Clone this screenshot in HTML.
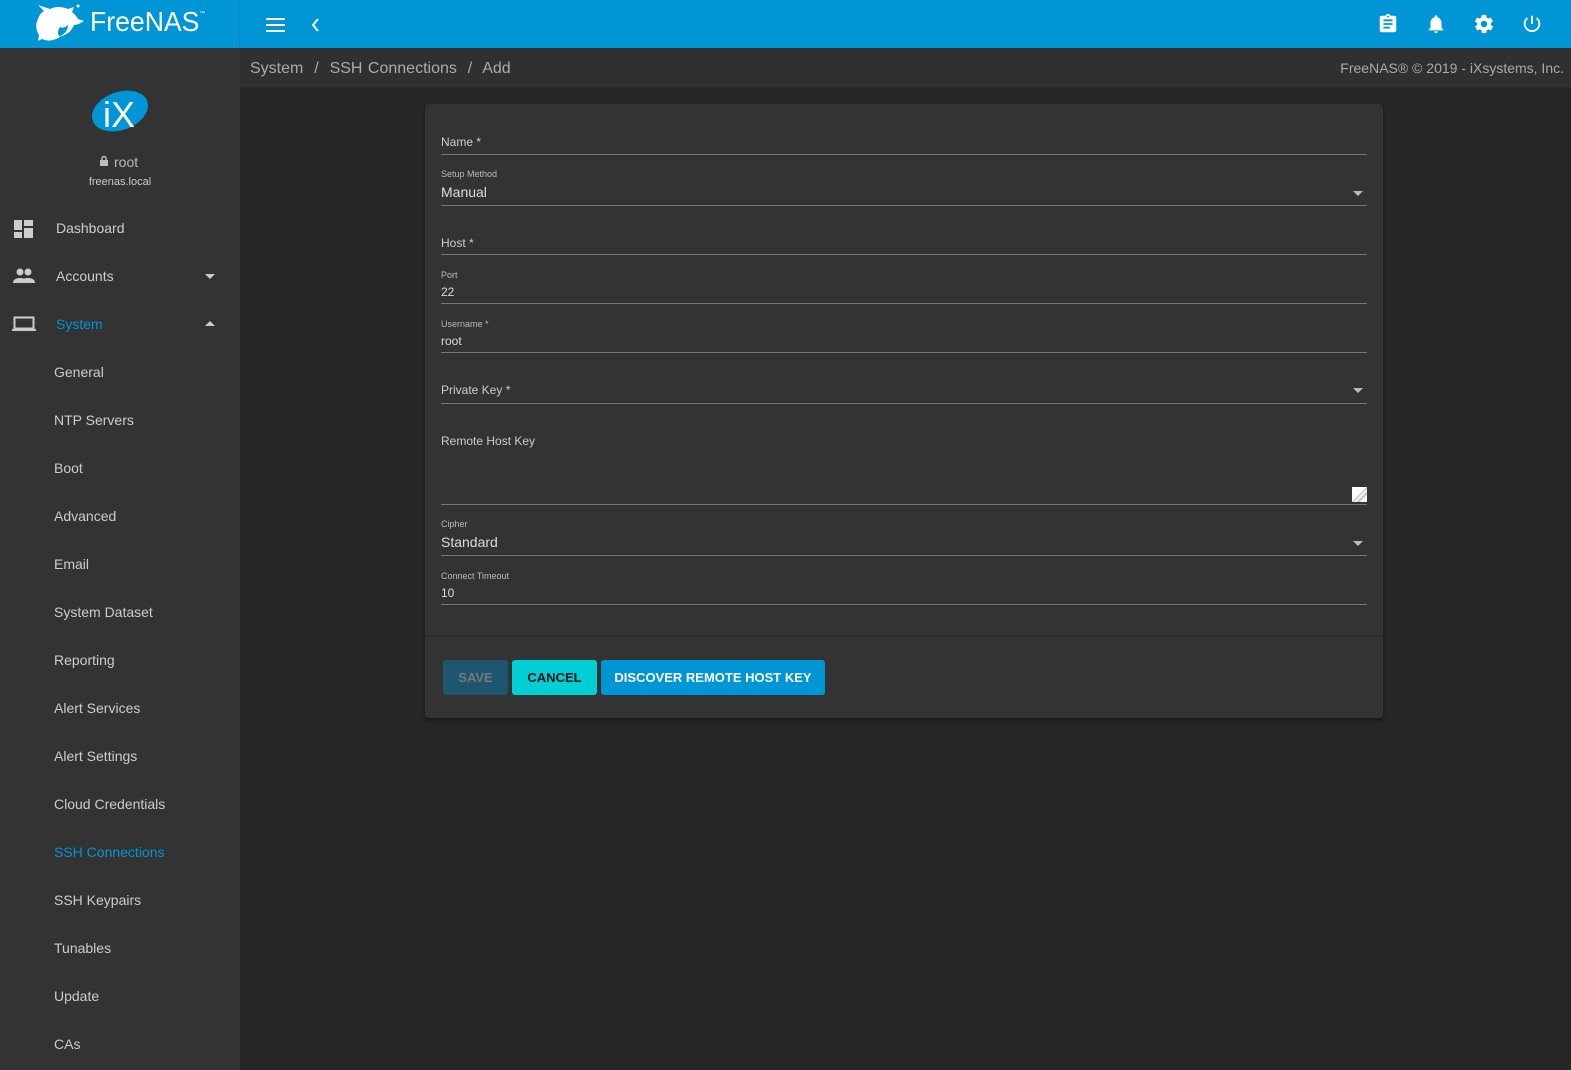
<!DOCTYPE html>
<html><head><meta charset="utf-8"><style>
*{box-sizing:border-box;margin:0;padding:0}
body{width:1571px;height:1070px;overflow:hidden;background:#262626;font-family:"Liberation Sans",sans-serif;color:#ccc;position:relative}
.top{position:absolute;left:0;top:0;width:1571px;height:48px;background:#0095d5}
.topsep{position:absolute;left:239px;top:0;width:1px;height:48px;background:#0a86bf}
.side{position:absolute;left:0;top:48px;width:240px;height:1022px;background:#333}
.crumb{position:absolute;left:240px;top:48px;width:1331px;height:40px;background:#303030;border-bottom:1px solid #2a2a2a}
.crumb .l{position:absolute;left:10px;top:12px;font-size:16px;color:#aaa;word-spacing:1px}
.crumb .r{position:absolute;right:7px;top:12px;font-size:14px;color:#aaa}
.item{position:absolute;left:0;width:240px;height:48px;font-size:14px;color:#ccc}
.item span{position:absolute;top:17px}
.card{position:absolute;left:425px;top:104px;width:958px;height:614px;background:#333;border-radius:4px;box-shadow:0 2px 3px rgba(0,0,0,.4)}
.card>div{margin-top:1px}
.line{position:absolute;left:16px;width:926px;height:1px;background:#777}
.ph{position:absolute;left:16px;font-size:12px;color:#ccc}
.sm{position:absolute;left:16px;font-size:9px;color:#bbb}
.val{position:absolute;left:16px;font-size:14px;color:#ddd}
.val.s{font-size:12px}
.arr{position:absolute;left:928px;width:0;height:0;border-left:5px solid transparent;border-right:5px solid transparent;border-top:5px solid #bbb}
.btn{position:absolute;top:555px;height:35px;border-radius:3px;font-size:13px;font-weight:bold;text-align:center;line-height:35px}
</style></head><body>
<div class="top">
 <svg style="position:absolute;left:34px;top:3px" width="52" height="40" viewBox="0 0 52 40"><path d="M4 2 L16 6 Q24 2 34 6 L40 4 L38 9 Q42 12 44 16 L50 18 Q44 22 40 22 Q36 32 24 34 Q34 30 34 22 Q30 26 26 24 Q22 30 26 34 Q16 40 8 36 L4 38 L5 32 Q0 24 4 16 Q6 10 10 8 Z" fill="#fff"/><circle cx="44" cy="3" r="1.5" fill="#fff"/></svg>
 <div style="position:absolute;left:90px;top:6px;font-size:28px;color:#fff;letter-spacing:0px;transform:scaleX(.95);transform-origin:left">FreeNAS<sup style="font-size:6px;vertical-align:16px">™</sup></div>
 <div style="position:absolute;left:266px;top:18px;width:19px;height:2px;background:#fff;box-shadow:0 6px 0 #fff,0 12px 0 #fff"></div>
 <svg style="position:absolute;left:310px;top:18px" width="10" height="14"><path d="M8 1 L3 7 L8 13" stroke="#fff" stroke-width="2" fill="none"/></svg>
 <svg style="position:absolute;left:1377px;top:13px" width="22" height="22" viewBox="0 0 24 24"><path fill="#fff" d="M19 3h-4.2C14.4 1.8 13.3 1 12 1s-2.4.8-2.8 2H5c-1.1 0-2 .9-2 2v14c0 1.1.9 2 2 2h14c1.1 0 2-.9 2-2V5c0-1.1-.9-2-2-2zm-7 0c.6 0 1 .4 1 1s-.4 1-1 1-1-.4-1-1 .4-1 1-1zm2 14H7v-2h7v2zm3-4H7v-2h10v2zm0-4H7V7h10v2z"/></svg>
 <svg style="position:absolute;left:1425px;top:13px" width="22" height="22" viewBox="0 0 24 24"><path fill="#fff" d="M12 22c1.1 0 2-.9 2-2h-4c0 1.1.9 2 2 2zm6-6v-5c0-3.1-1.6-5.6-4.5-6.3V4c0-.8-.7-1.5-1.5-1.5s-1.5.7-1.5 1.5v.7C7.6 5.4 6 7.9 6 11v5l-2 2v1h16v-1l-2-2z"/></svg>
 <svg style="position:absolute;left:1473px;top:13px" width="22" height="22" viewBox="0 0 24 24"><path fill="#fff" d="M19.4 13c0-.3.1-.6.1-1s0-.7-.1-1l2.1-1.600c.2-.2.2-.4.1-.6l-2-3.5c-.1-.2-.4-.3-.6-.2l-2.5 1c-.5-.4-1.1-.7-1.7-1l-.4-2.600c0-.2-.2-.4-.5-.4h-4c-.2 0-.4.2-.5.4l-.4 2.600c-.6.3-1.2.6-1.7 1l-2.500-1c-.2-.1-.5 0-.6.2l-2 3.5c-.1.2-.1.5.1.6L4.6 11c0 .3-.1.6-.1 1s0 .7.1 1l-2.100 1.600c-.2.2-.2.4-.1.6l2 3.5c.1.2.4.3.6.2l2.500-1c.5.4 1.100.7 1.700 1l.4 2.600c0 .2.2.4.5.4h4c.2 0 .4-.2.5-.4l.4-2.600c.6-.3 1.200-.6 1.700-1l2.500 1c.2.1.5 0 .6-.2l2-3.500c.1-.2.1-.5-.1-.6L19.4 13zM12 15.5c-1.900 0-3.500-1.600-3.500-3.500s1.600-3.500 3.500-3.500 3.500 1.600 3.500 3.500-1.600 3.500-3.500 3.500z"/></svg>
 <svg style="position:absolute;left:1521px;top:13px" width="22" height="22" viewBox="0 0 24 24"><path fill="none" stroke="#fff" stroke-width="2" d="M12 3v9M7 5.5A8 8 0 1 0 17 5.5"/></svg>
</div>
<div class="topsep"></div>
<div class="side">
 <svg style="position:absolute;left:91px;top:40px" width="58" height="46" viewBox="0 0 58 46"><ellipse cx="29" cy="23" rx="29" ry="19" transform="rotate(-20 29 23)" fill="#0095d5"/><text x="12" y="39" font-family="Liberation Sans" font-size="36" fill="#fff">iX</text></svg>
 <svg style="position:absolute;left:99px;top:107px" width="10" height="12" viewBox="0 0 10 12"><rect x="1" y="5" width="8" height="6" fill="#bbb"/><path d="M3 5V3.5a2 2 0 0 1 4 0V5" stroke="#bbb" stroke-width="1.5" fill="none"/></svg>
 <div style="position:absolute;left:114px;top:106px;font-size:14px;color:#bbb">root</div>
 <div style="position:absolute;left:0;width:240px;text-align:center;top:128px;font-size:11px;color:#ccc">freenas.local</div>
</div>
<div class="item" style="top:203px"><svg style="position:absolute;left:14px;top:17px" width="20" height="18"><rect x="0" y="0" width="8" height="10" fill="#ccc"/><rect x="0" y="12" width="8" height="6" fill="#ccc"/><rect x="10" y="0" width="9" height="6" fill="#ccc"/><rect x="10" y="8" width="9" height="10" fill="#ccc"/></svg><span style="left:56px">Dashboard</span></div>
<div class="item" style="top:251px"><svg style="position:absolute;left:12px;top:16px" width="24" height="18" viewBox="0 0 24 18"><circle cx="8" cy="5" r="3.5" fill="#ccc"/><circle cx="16" cy="5" r="3.5" fill="#ccc"/><path d="M1 16c0-4 4-5 7-5s7 1 7 5zM13 16c0-2 0-4-1-4.5 1-.5 3-.5 4-.5 3 0 7 1 7 5z" fill="#ccc"/></svg><span style="left:56px">Accounts</span><div style="position:absolute;left:205px;top:23px;border-left:5px solid transparent;border-right:5px solid transparent;border-top:5px solid #ccc"></div></div>
<div class="item" style="top:299px"><svg style="position:absolute;left:12px;top:17px" width="24" height="16"><rect x="2.500" y="1.500" width="19" height="11" fill="none" stroke="#ccc" stroke-width="2"/><rect x="0" y="13" width="24" height="2" fill="#ccc"/></svg><span style="left:56px;color:#0095d5">System</span><div style="position:absolute;left:205px;top:22px;border-left:5px solid transparent;border-right:5px solid transparent;border-bottom:5px solid #ccc"></div></div>
<div class="item" style="top:347px"><span style="left:54px">General</span></div>
<div class="item" style="top:395px"><span style="left:54px">NTP Servers</span></div>
<div class="item" style="top:443px"><span style="left:54px">Boot</span></div>
<div class="item" style="top:491px"><span style="left:54px">Advanced</span></div>
<div class="item" style="top:539px"><span style="left:54px">Email</span></div>
<div class="item" style="top:587px"><span style="left:54px">System Dataset</span></div>
<div class="item" style="top:635px"><span style="left:54px">Reporting</span></div>
<div class="item" style="top:683px"><span style="left:54px">Alert Services</span></div>
<div class="item" style="top:731px"><span style="left:54px">Alert Settings</span></div>
<div class="item" style="top:779px"><span style="left:54px">Cloud Credentials</span></div>
<div class="item" style="top:827px"><span style="left:54px;color:#0095d5">SSH Connections</span></div>
<div class="item" style="top:875px"><span style="left:54px">SSH Keypairs</span></div>
<div class="item" style="top:923px"><span style="left:54px">Tunables</span></div>
<div class="item" style="top:971px"><span style="left:54px">Update</span></div>
<div class="item" style="top:1019px"><span style="left:54px">CAs</span></div>
<div class="crumb"><div class="l">System &nbsp;/&nbsp; SSH Connections &nbsp;/&nbsp; Add</div><div class="r">FreeNAS® © 2019 - iXsystems, Inc.</div></div>
<div class="card">
 <div class="ph" style="top:30px">Name *</div><div class="line" style="top:49px"></div>
 <div class="sm" style="top:64px">Setup Method</div><div class="val" style="top:79px">Manual</div><div class="arr" style="top:86px"></div><div class="line" style="top:100px"></div>
 <div class="ph" style="top:131px">Host *</div><div class="line" style="top:149px"></div>
 <div class="sm" style="top:165px">Port</div><div class="val s" style="top:180px">22</div><div class="line" style="top:198px"></div>
 <div class="sm" style="top:214px">Username *</div><div class="val s" style="top:229px">root</div><div class="line" style="top:247px"></div>
 <div class="ph" style="top:278px">Private Key *</div><div class="arr" style="top:283px"></div><div class="line" style="top:298px"></div>
 <div class="ph" style="top:329px">Remote Host Key</div>
 <div style="position:absolute;left:927px;top:382px;width:15px;height:15px;background:linear-gradient(135deg,#fff 50%,#bbb 50%,#fff 60%,#bbb 70%,#fff 80%)"></div>
 <div class="line" style="top:399px"></div>
 <div class="sm" style="top:414px">Cipher</div><div class="val" style="top:429px">Standard</div><div class="arr" style="top:436px"></div><div class="line" style="top:450px"></div>
 <div class="sm" style="top:466px">Connect Timeout</div><div class="val s" style="top:481px">10</div><div class="line" style="top:499px"></div>
 <div style="position:absolute;left:0;top:531px;width:958px;height:1px;background:#2a2a2a"></div>
 <div class="btn" style="left:18px;width:65px;background:#1e5670;color:#777">SAVE</div>
 <div class="btn" style="left:87px;width:85px;background:#00cfd6;color:#111">CANCEL</div>
 <div class="btn" style="left:176px;width:224px;background:#0095d5;color:#fff">DISCOVER REMOTE HOST KEY</div>
</div>
</body></html>
